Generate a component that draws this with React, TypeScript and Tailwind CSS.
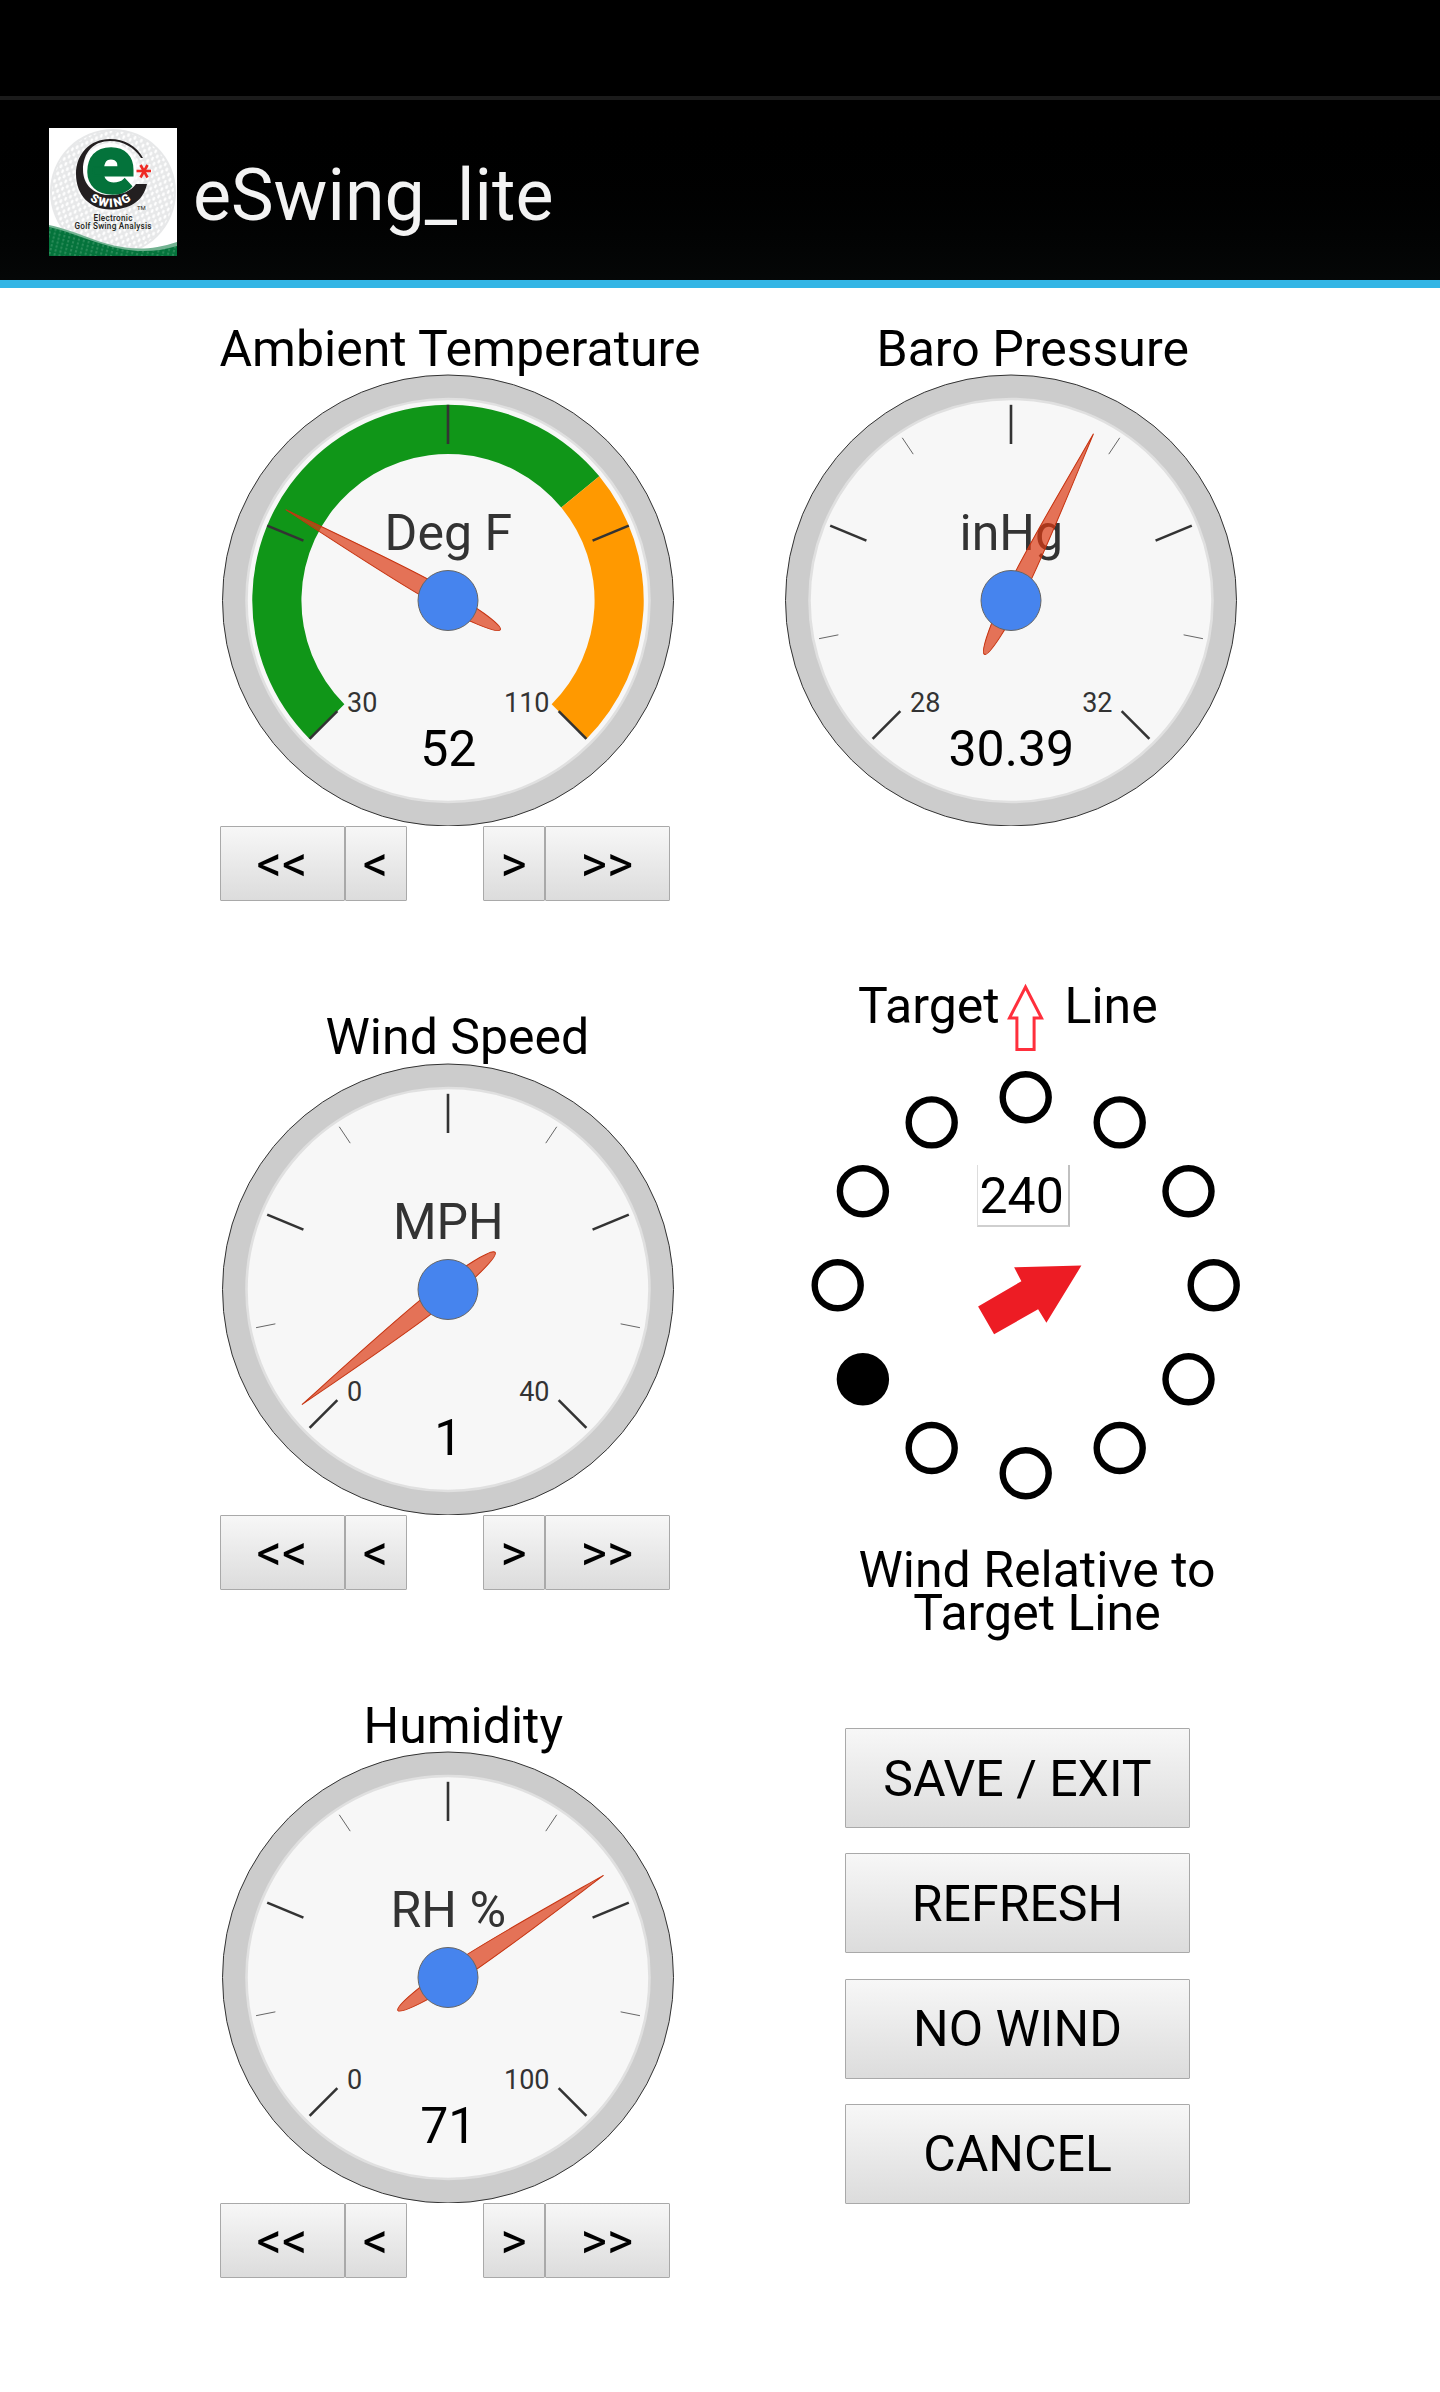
import { useState } from 'react';

type Band = {
  from: number;
  to: number;
  color: string;
};

type GaugeProps = {
  label: string;
  value: number;
  min: number;
  max: number;
  bands?: Band[];
};

const RADIUS = 225.5;
const majorTicks = [-135, -67.5, 0, 67.5, 135];
const minorTicks = [-101.25, -33.75, 33.75, 101.25];
const directions = [0, 30, 60, 90, 120, 150, 180, 210, 240, 270, 300, 330];

function point(angle: number, radius: number) {
  const rad = (angle * Math.PI) / 180;
  return { x: Math.sin(rad) * radius, y: -Math.cos(rad) * radius };
}

function bandPath(start: number, end: number) {
  const outer = RADIUS * 0.868;
  const inner = RADIUS * 0.65;
  const large = end - start > 180 ? 1 : 0;
  const a = point(start, outer);
  const b = point(end, outer);
  const c = point(end, inner);
  const d = point(start, inner);
  return `M${a.x},${a.y} A${outer},${outer} 0 ${large} 1 ${b.x},${b.y} L${c.x},${c.y} A${inner},${inner} 0 ${large} 0 ${d.x},${d.y} Z`;
}

function Tick({ angle, from, to, width, color }: { angle: number; from: number; to: number; width: number; color: string }) {
  const a = point(angle, from);
  const b = point(angle, to);
  return <line x1={a.x} y1={a.y} x2={b.x} y2={b.y} stroke={color} strokeWidth={width} />;
}

function Gauge({ label, value, min, max, bands }: GaugeProps) {
  const toAngle = (v: number) => ((v - min) / (max - min)) * 270 - 135;

  return (
    <svg className="ml-0.5 block h-[452px] w-[452px]" viewBox="-226 -226.5 452 452">
      <circle r={RADIUS} fill="#cccccc" stroke="#333333" strokeWidth="1" />
      <circle r="201.5" fill="#f7f7f7" stroke="#e0e0e0" strokeWidth="2.6" />
      {bands?.map((band) => (
        <path key={band.color} d={bandPath(toAngle(band.from), toAngle(band.to))} fill={band.color} />
      ))}
      {!bands && minorTicks.map((angle) => <Tick key={angle} angle={angle} from={176} to={195.7} width={1} color="#666666" />)}
      {majorTicks.map((angle) => (
        <Tick key={angle} angle={angle} from={156.5} to={195.7} width={2.6} color="#333333" />
      ))}
      <text x="0.3" y="-50.5" fontSize="50" fill="#333333" textAnchor="middle">
        {label}
      </text>
      <text x="-101" y="111.5" fontSize="27" fill="#333333">
        {min}
      </text>
      <text x="101.5" y="111.5" fontSize="27" fill="#333333" textAnchor="end">
        {max}
      </text>
      <text x="0.3" y="165.5" fontSize="50" fill="#000000" textAnchor="middle">
        {value}
      </text>
      <path
        transform={`rotate(${toAngle(value)})`}
        d="M0,-186 C3,-140 9,-60 9,-15 C9,25 5,60 0,60 C-5,60 -9,25 -9,-15 C-9,-60 -3,-140 0,-186 Z"
        fill="#dc3912"
        fillOpacity="0.7"
        stroke="#c63310"
        strokeWidth="1"
      />
      <circle r="30" fill="#4684ee" stroke="#666666" strokeWidth="1" />
    </svg>
  );
}

const buttonClass =
  'block rounded-[1px] border border-[#a9a9a9] bg-linear-to-b from-[#f7f7f7] to-[#dcdcdc] text-center text-black';

function Stepper({ onStep }: { onStep: (delta: number) => void }) {
  return (
    <div className="flex h-[75px] text-[50px] leading-[75px]">
      <button type="button" onClick={() => onStep(-10)} className={`${buttonClass} w-[125px]`}>
        &lt;&lt;
      </button>
      <button type="button" onClick={() => onStep(-1)} className={`${buttonClass} w-[62px]`}>
        &lt;
      </button>
      <button type="button" onClick={() => onStep(1)} className={`${buttonClass} ml-[76px] w-[62px]`}>
        &gt;
      </button>
      <button type="button" onClick={() => onStep(10)} className={`${buttonClass} w-[125px]`}>
        &gt;&gt;
      </button>
    </div>
  );
}

function Logo() {
  return (
    <svg className="block h-32 w-32 overflow-visible" viewBox="0 0 128 128">
      <defs>
        <pattern id="dimples" width="7" height="8" patternUnits="userSpaceOnUse" patternTransform="rotate(24)">
          <ellipse cx="2" cy="2" rx="1.3" ry="2.1" fill="#ffffff" />
          <ellipse cx="5.5" cy="6" rx="1.3" ry="2.1" fill="#ffffff" />
        </pattern>
        <pattern id="grass" width="5" height="4" patternUnits="userSpaceOnUse" patternTransform="rotate(14)">
          <path d="M1,0 V2.4" stroke="#6db38c" strokeWidth="0.7" />
        </pattern>
        <path id="swing" d="M30,57 A33.5,33.5 0 0 0 93,57" />
      </defs>
      <rect width="128" height="128" fill="#ffffff" />
      <circle cx="64" cy="64" r="63" fill="#e7e8e9" />
      <circle cx="64" cy="64" r="61" fill="url(#dimples)" />
      <circle cx="60" cy="50" r="34" fill="#ffffff" fillOpacity="0.45" />
      <path d="M0,97 C40,105 72,133 128,114 V128 H0 Z" fill="#73b392" />
      <path d="M0,99 C40,108 76,134 128,118 V128 H0 Z" fill="#04733b" />
      <path d="M0,99 C40,108 76,134 128,118 V128 H0 Z" fill="url(#grass)" />
      <path d="M94,30 C88,18 75,11 61,11 C41,11 27,26 27,46 C27,67 41,81.5 61,81.5 C80,81.5 94,74 98,56 H87 C82,63 73,67 61,67 C44,67 34,56 34,42 C34,24 45,13 61,13 C74,13 85,19 92,30 Z" fill="#231f20" />
      <ellipse cx="61" cy="41" rx="26.5" ry="26" fill="#ffffff" />
      <text x="36.5" y="64.5" fontSize="84" fontWeight="900" fill="#04733b" stroke="#04733b" strokeWidth="1.6" textLength="49" lengthAdjust="spacingAndGlyphs">
        e
      </text>
      <g stroke="#ee2a24" strokeWidth="2.6">
        <path d="M87.5,43 H102" />
        <path d="M91.5,37 L98.5,49.5" />
        <path d="M98.5,37 L91.5,49.5" />
      </g>
      <text fontSize="12" fontWeight="900" fill="#ffffff" letterSpacing="1.6">
        <textPath href="#swing" startOffset="51%" textAnchor="middle">
          SWING
        </textPath>
      </text>
      <text x="88" y="82" fontSize="6" fill="#231f20">
        TM
      </text>
      <text x="64" y="93" fontSize="8.2" fontWeight="500" fill="#231f20" textAnchor="middle" textLength="39">
        Electronic
      </text>
      <text x="64" y="101.3" fontSize="8.2" fontWeight="500" fill="#231f20" textAnchor="middle" textLength="77">
        Golf Swing Analysis
      </text>
    </svg>
  );
}

function WindDial({ heading, onSelect }: { heading: number; onSelect: (heading: number) => void }) {
  return (
    <div className="relative h-[434px]">
      <svg className="ml-3.5 block h-[434px] w-[456px]" viewBox="-228.7 -217.2 456 434">
        {directions.map((direction) => {
          const { x, y } = point(direction, 188);
          return (
            <circle
              key={direction}
              cx={x}
              cy={y}
              r="23"
              stroke="#000000"
              strokeWidth="6.4"
              fill={direction === heading ? '#000000' : '#ffffff'}
              onClick={() => onSelect(direction)}
            />
          );
        })}
        <path
          transform={`rotate(${heading - 240})`}
          d="M-47.6,21.4 L-4.3,-4 L-11.6,-17.9 L55.7,-19.6 L20.7,37.5 L12.4,24.1 L-31.6,49.1 Z"
          fill="#ed1c24"
        />
      </svg>
      <div className="absolute top-[97px] left-[194px] h-[62px] w-[93px] border-r-2 border-b-2 border-l border-r-[#c0c0c0] border-b-[#cfcfcf] border-l-[#dddddd] pl-0.5 leading-[63px]">
        {heading}
      </div>
    </div>
  );
}

export default function App() {
  const [temperature, setTemperature] = useState(52);
  const [windSpeed, setWindSpeed] = useState(1);
  const [humidity, setHumidity] = useState(71);
  const [heading, setHeading] = useState(240);

  return (
    <div className="h-[2392px] w-[1440px] overflow-hidden bg-white font-['Roboto',sans-serif] text-[50px] text-black">
      <div className="h-24 bg-black" />
      <header className="flex h-48 items-center border-t-4 border-b-8 border-t-[#1b1b1b] border-b-[#33b5e5] bg-linear-to-b from-black to-[#050707] pt-1 pl-[49px]">
        <Logo />
        <h1 className="ml-4 pt-2 text-[71.7px] leading-[84px] text-[#f3f3f3]">eSwing_lite</h1>
      </header>

      <main className="flex pt-[33px] pl-[219.5px]">
        <div className="flex w-[563px] shrink-0 flex-col gap-[108.7px]">
          <section>
            <h2 className="h-[53px] leading-[56px]">Ambient Temperature</h2>
            <Gauge
              label="Deg F"
              value={temperature}
              min={30}
              max={110}
              bands={[
                { from: 30, to: 85, color: '#109618' },
                { from: 85, to: 110, color: '#ff9900' },
              ]}
            />
            <Stepper onStep={(delta) => setTemperature(temperature + delta)} />
          </section>
          <section>
            <h2 className="h-[53px] pl-[106px] leading-[54px]">Wind Speed</h2>
            <Gauge label="MPH" value={windSpeed} min={0} max={40} />
            <Stepper onStep={(delta) => setWindSpeed(windSpeed + delta)} />
          </section>
          <section>
            <h2 className="h-[53px] pl-[144px] leading-[56px]">Humidity</h2>
            <Gauge label="RH %" value={humidity} min={0} max={100} />
            <Stepper onStep={(delta) => setHumidity(humidity + delta)} />
          </section>
        </div>

        <div className="w-[500px] shrink-0">
          <h2 className="h-[53px] pl-[94px] leading-[56px]">Baro Pressure</h2>
          <Gauge label="inHg" value={30.39} min={28} max={32} />

          <div className="mt-[152px] flex h-[90px] pl-[75.5px] leading-[56px]">
            <span className="w-[146.5px]">Target</span>
            <svg className="mt-1 block h-[72px] w-10" viewBox="0 0 40 72">
              <path d="M20.5,5 L36.5,36 H29.1 V67.5 H11.9 V36 H4.5 Z" fill="none" stroke="#ff2f3c" strokeWidth="3" />
            </svg>
            <span className="ml-5">Line</span>
          </div>
          <WindDial heading={heading} onSelect={setHeading} />
          <p className="mt-[47px] w-[509px] text-center leading-[43px]">
            Wind Relative to
            <br />
            Target Line
          </p>

          <div className="mt-[93px] ml-[62.5px] flex w-[345px] flex-col gap-[25.3px]">
            <button type="button" className={`${buttonClass} h-[100px] pt-0.5`}>
              SAVE / EXIT
            </button>
            <button type="button" className={`${buttonClass} h-[100px] pt-0.5`}>
              REFRESH
            </button>
            <button type="button" onClick={() => setWindSpeed(0)} className={`${buttonClass} h-[100px] pt-0.5`}>
              NO WIND
            </button>
            <button type="button" className={`${buttonClass} h-[100px] pt-0.5`}>
              CANCEL
            </button>
          </div>
        </div>
      </main>
    </div>
  );
}
